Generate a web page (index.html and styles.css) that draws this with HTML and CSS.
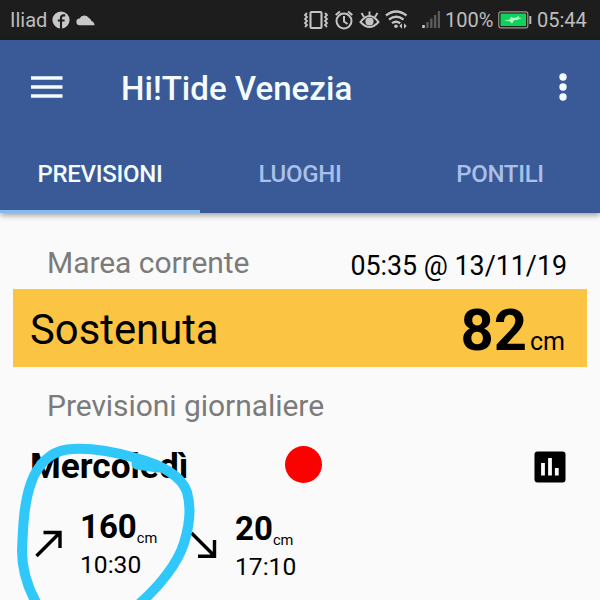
FILE: index.html
```html
<!DOCTYPE html>
<html lang="it">
<head>
<meta charset="utf-8">
<title>Hi!Tide Venezia</title>
<link rel="stylesheet" href="styles.css">
</head>
<body>
<div class="screen">
  <div class="status">
    <span class="carrier">Iliad</span>
    <svg class="fb" width="18" height="18" viewBox="0 0 18 18"><circle cx="9" cy="9" r="8.6" fill="#c8c8c8"/><path d="M9 17.8V6.8q0-2.4 2.6-2.4h1.6M5.800 9.500h6.800" fill="none" stroke="#1d1d1d" stroke-width="2.100"/></svg>
    <svg class="cloud" width="19" height="12" viewBox="0 0 19 12"><path d="M4 11.200A3.400 3.400 0 0 1 3.600 4.400 5.300 5.300 0 0 1 13 4.100Q15 5 15.200 6.800 18.300 8 18.600 11.200Z" fill="#c8c8c8"/></svg>
    <svg class="indicators" width="138" height="24" viewBox="0 0 138 24" fill="none" stroke="#c4c4c4">
      <rect x="8.500" y="4" width="11" height="16" rx="1" stroke-width="2.100"/>
      <path d="M5 5l-2 2 2 2-2 2 2 2-2 2 2 2-2 2M23 5l2 2-2 2 2 2-2 2 2 2-2 2 2 2" stroke-width="1.800"/>
      <circle cx="42" cy="13" r="7.500" stroke-width="2"/>
      <path d="M42 8v5.500l3.500 2.500M33.700 7l4.200-3.600M50.300 7l-4.200-3.600" stroke-width="2"/>
      <path d="M58.500 14q9-12 18 0-9 10-18 0Z" stroke-width="2"/>
      <circle cx="67.500" cy="13.500" r="4.100" fill="#c4c4c4" stroke="none"/>
      <path d="M67.500 8V3.500M62 9l-2.500-4M73 9l2.500-4" stroke-width="1.900"/>
      <path d="M84 7.500q10-8 20.500 0M87 11.500q7.200-5.500 14.500 0M90 15.200q4-3 8.200 0" stroke-width="2.300"/>
      <circle cx="94" cy="18.300" r="1.800" fill="#c4c4c4" stroke="none"/>
      <path d="M100 15.300l-2.700 2.700 2.700 2.700ZM102 15.300l2.700 2.700-2.700 2.700Z" fill="#c4c4c4" stroke="none"/>
      <path d="M121.500 20v-3" stroke-width="2.600"/>
      <path d="M125.500 20v-6M129.300 20v-9.500M133.100 20v-13M137 20V3" stroke="#5b5b5b" stroke-width="2.400"/>
    </svg>
    <span class="percent">100%</span>
    <svg class="battery" width="35" height="18" viewBox="0 0 35 18"><rect x=".8" y=".8" width="29" height="16" rx="2" fill="#111" stroke="#a39791" stroke-width="1.200"/><rect x="2.500" y="2.500" width="25.600" height="12.600" fill="#0bd35c"/><path d="M6 9.500l6-1 .8-2.700 2.700 1.200 3.500-.8 1.500-1.500.5 2 2.500.5-4.500 1.800-3 .3-2 3.200-2.300-2.200Z" fill="#b8f5c9"/><path d="M32.300 5v8" stroke="#bbb" stroke-width="2"/></svg>
    <span class="clock">05:44</span>
  </div>

  <header class="appbar">
    <div class="toolbar">
      <svg class="menu" width="32" height="22" viewBox="0 0 32 22"><path d="M0 2h31.500M0 11h31.500M0 20h31.500" stroke="#f4fbff" stroke-width="3.400"/></svg>
      <h1>Hi!Tide Venezia</h1>
      <svg class="more" width="8" height="28" viewBox="0 0 8 28" fill="#f4fbff"><circle cx="4" cy="4" r="3.700"/><circle cx="4" cy="14" r="3.700"/><circle cx="4" cy="24" r="3.700"/></svg>
    </div>
    <nav class="tabs">
      <span class="tab active">PREVISIONI</span>
      <span class="tab">LUOGHI</span>
      <span class="tab">PONTILI</span>
    </nav>
  </header>

  <main>
    <div class="current">
      <span class="label">Marea corrente</span>
      <span class="date">05:35 @ 13/11/19</span>
    </div>
    <section class="banner">
      <span class="level">Sostenuta</span>
      <span class="reading"><b>82</b><small>cm</small></span>
    </section>
    <div class="label daily">Previsioni giornaliere</div>
    <div class="day">
      <h2>Mercoledì</h2>
      <span class="dot"></span>
      <svg class="chart" width="32" height="32" viewBox="0 0 32 32"><rect x=".5" y=".5" width="31" height="31" rx="3"/><path d="M9 12v12.500M16 7v17.500M22.800 17v7.500" stroke="#fafafa" stroke-width="3.800"/></svg>
    </div>
    <div class="tides">
      <svg class="up" width="28" height="28" viewBox="0 0 28 28"><path d="M1.500 26L25 2.500M8.500 2.500H25V18" fill="none" stroke="#000" stroke-width="3.400"/></svg>
      <div class="tide first">
        <div class="value"><b>160</b><small>cm</small></div>
        <div class="time">10:30</div>
      </div>
      <svg class="down" width="28" height="28" viewBox="0 0 28 28"><path d="M1.500 2L24.500 25M8 25.300H24.500V9" fill="none" stroke="#000" stroke-width="3.400"/></svg>
      <div class="tide second">
        <div class="value"><b>20</b><small>cm</small></div>
        <div class="time">17:10</div>
      </div>
    </div>
  </main>

  <svg class="marker" width="600" height="600" viewBox="0 0 600 600" fill="none" stroke="#30c8fb" stroke-linecap="round" stroke-linejoin="round">
    <path d="M38 606C27 587 22 571 22 551C23 525 24 503 31 483C37 466 49 452 67 449.500C89 447 111 451 136 458C163 465 182 477 187 492C191 506 190 524 184 543C178 563 159 587 138 605" stroke-width="10"/>
    <path d="M137 464L158 467" stroke-width="11"/>
  </svg>
</div>
</body>
</html>
```
FILE: styles.css
```css
* { box-sizing: border-box; }
body { margin: 0; font-family: Roboto, sans-serif; color: #000; background: #fafafa; }
h1, h2 { margin: 0; }
svg { display: block; flex: none; }
span, b, small, h1, h2 { white-space: nowrap; }
.screen { position: relative; width: 600px; height: 600px; overflow: hidden; }

.status { display: flex; align-items: center; height: 40px; padding-left: 10px; background: #1d1d1d; color: #bebebe; font-size: 20px; line-height: 42px; }
.carrier { width: 42px; }
.cloud { margin-left: 6px; }
.indicators { margin-left: 207px; }
.percent { width: 53px; margin-left: 5px; font-size: 20px; line-height: 40px; }
.clock { margin-left: 4px; }

.appbar { position: relative; height: 173px; background: #3a5a97; color: #f4fbff; box-shadow: 0 2px 6px rgba(0, 0, 0, .4); }
.toolbar { display: flex; align-items: center; height: 94px; padding: 0 33px 0 31px; }
.toolbar h1 { flex: 1; margin-left: 58px; font-size: 33.1px; font-weight: 500; line-height: 40px; padding-top: 3px; }
.tabs { display: grid; grid-template-columns: repeat(3, 1fr); height: 79px; }
.tab { height: 79px; text-align: center; font-size: 24px; font-weight: 500; letter-spacing: -.3px; line-height: 80px; color: #a9c0e8; }
.tab.active { color: #f4fbff; border-bottom: 3px solid #86b9ec; }

main { padding: 0 13px; }
.label { color: #7b7b7b; font-size: 30px; line-height: 40px; letter-spacing: -.05px; }
.current { display: flex; justify-content: space-between; padding: 30px 20px 6px 34px; height: 76px; }
.date { font-size: 26.8px; line-height: 47px; }
.banner { display: flex; justify-content: space-between; align-items: baseline; height: 78px; padding: 0 22px 0 17px; background: #fbc543; line-height: 82px; }
.level { font-size: 41.8px; position: relative; top: -6px; }
.reading b { font-size: 58px; }
.reading small { font-size: 25px; margin-left: 3px; }
.daily { margin: 19px 0 0 34px; }
.day { display: flex; align-items: center; height: 42px; margin: 18px 21px 0 17px; }
.day h2 { width: 255px; height: 42px; font-size: 35.2px; line-height: 42px; padding-top: 1px; }
.dot { width: 37px; height: 37px; margin-top: -1px; border-radius: 50%; background: #fe0000; }
.chart { margin: 3px 0 0 auto; }
.tides { display: flex; margin: 20px 0 0 22px; }
.up { margin-top: 24px; }
.down { margin: 25px 0 0 3px; }
.tide.first { width: 107px; margin: 2px 0 0 17px; }
.tide.second { margin: 4px 0 0 17px; }
.value { display: flex; height: 41px; line-height: 38px; }
.value b { font-size: 33px; }
.value small { font-size: 14.6px; line-height: 61px; margin-left: 0; }
.time { font-size: 24.6px; line-height: 34px; margin-top: -1px; }

/* Freehand stroke drawn over the forecast */
.marker { position: absolute; inset: 0; pointer-events: none; }
```
